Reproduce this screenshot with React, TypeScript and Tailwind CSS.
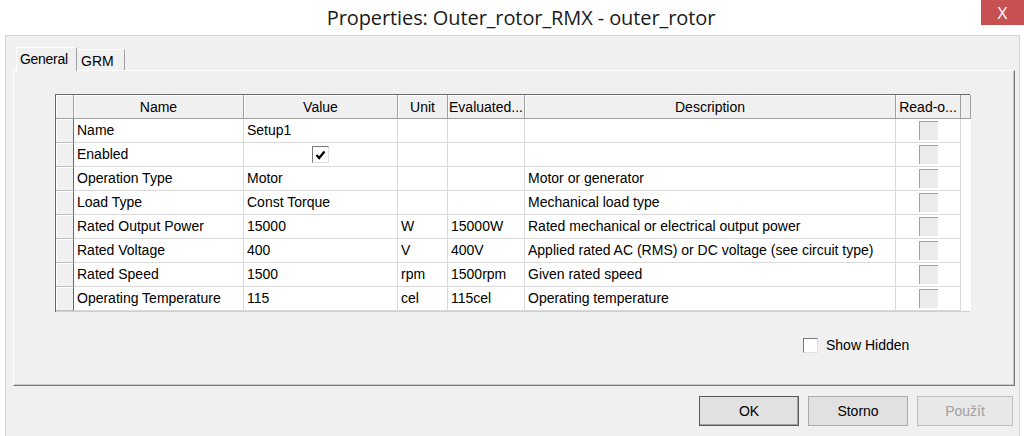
import React from 'react';

type Row = {
  name: string;
  value?: string;
  check?: boolean;
  unit?: string;
  evaluated?: string;
  desc?: string;
};

const rows: Row[] = [
  { name: 'Name', value: 'Setup1' },
  { name: 'Enabled', check: true },
  { name: 'Operation Type', value: 'Motor', desc: 'Motor or generator' },
  { name: 'Load Type', value: 'Const Torque', desc: 'Mechanical load type' },
  { name: 'Rated Output Power', value: '15000', unit: 'W', evaluated: '15000W', desc: 'Rated mechanical or electrical output power' },
  { name: 'Rated Voltage', value: '400', unit: 'V', evaluated: '400V', desc: 'Applied rated AC (RMS) or DC voltage (see circuit type)' },
  { name: 'Rated Speed', value: '1500', unit: 'rpm', evaluated: '1500rpm', desc: 'Given rated speed' },
  { name: 'Operating Temperature', value: '115', unit: 'cel', evaluated: '115cel', desc: 'Operating temperature' },
];

const cols = 'grid grid-cols-[18px_170px_154px_50px_77px_371px_65px_10px]';

function HeadCell({ children }: { children?: React.ReactNode }) {
  return (
    <div className="flex h-[24px] items-center justify-center overflow-hidden whitespace-nowrap border-r border-b border-[#a0a0a0] bg-[#f0f0f0] pt-[1px] shadow-[inset_1px_1px_0_#ffffff]">
      {children}
    </div>
  );
}

function Cell({ children, center }: { children?: React.ReactNode; center?: boolean }) {
  return (
    <div
      className={`flex h-[24px] items-center overflow-hidden whitespace-nowrap border-r border-b border-[#d9d9d9] bg-white ${
        center ? 'justify-center' : 'pl-[3px]'
      }`}
    >
      {children}
    </div>
  );
}

function ReadOnlyBox() {
  return <div className="h-[19px] w-[19px] border-t border-l border-[#a0a0a0] bg-[#ececec]" />;
}

function CheckedBox() {
  return (
    <div className="flex h-[17px] w-[17px] items-center justify-center border-t border-l border-[#7a7a7a] border-r border-b border-r-[#e0e0e0] border-b-[#e0e0e0] bg-white">
      <svg width="11" height="10" viewBox="0 0 11 10">
        <path d="M1.5 5 L4.2 8 L9.5 1.5" fill="none" stroke="#000" strokeWidth="2.2" />
      </svg>
    </div>
  );
}

export default function App() {
  return (
    <div className="flex h-[436px] w-[1024px] flex-col overflow-hidden bg-white font-['Liberation_Sans',Arial,sans-serif] text-[14px] text-black">
      {/* title bar */}
      <div className="relative flex h-[35px] shrink-0 items-center justify-center pl-[18px]">
        <span className="font-['Open_Sans',sans-serif] text-[20px] tracking-[-0.1px] text-[#1a1a1a]">
          Properties: Outer_rotor_RMX - outer_rotor
        </span>
        <div className="absolute top-0 right-0 flex h-[25px] w-[43px] items-center justify-center bg-[#c75050] font-['Open_Sans',sans-serif] text-[17px] text-white">
          X
        </div>
      </div>

      {/* body */}
      <div className="ml-[5px] mr-[4px] flex flex-1 flex-col border-t border-l border-r border-[#d4d4d4] bg-[#f0f0f0] pt-[11px] pl-[7px] pr-[4px]">
        {/* tabs */}
        <div className="relative z-10 flex h-[23px] items-end pl-[3px]">
          <div className="-mb-[1px] flex h-[24px] w-[61px] items-start border-t border-l border-r border-t-white border-l-white border-r-[#a0a0a0] bg-[#f0f0f0] pl-[3px] pt-[1px] tracking-[-0.3px]">
            General
          </div>
          <div className="flex h-[21px] w-[48px] items-start border-t border-r border-t-white border-r-[#a0a0a0] pl-[4px] pt-[1px]">
            GRM
          </div>
        </div>

        {/* panel */}
        <div className="flex h-[316px] flex-col border border-t-white border-l-white border-r-[#7a7a7a] border-b-[#7a7a7a] shadow-[inset_-1px_-1px_0_#c8c8c8]">
          {/* table */}
          <div className="ml-[41px] mt-[23px] w-[915px] border-t border-l border-[#6a6a6a]">
            <div className={cols}>
              <HeadCell />
              <HeadCell>Name</HeadCell>
              <HeadCell>Value</HeadCell>
              <HeadCell>Unit</HeadCell>
              <HeadCell>Evaluated...</HeadCell>
              <HeadCell>Description</HeadCell>
              <HeadCell>Read-o...</HeadCell>
              <div className="h-[24px] border-r border-b border-[#a0a0a0] bg-[#f0f0f0]" />
            </div>
            {rows.map((r) => (
              <div key={r.name} className={cols}>
                <div className="h-[24px] border-r border-b border-r-[#6a6a6a] border-b-[#c0c0c0] bg-[#f0f0f0] shadow-[inset_1px_1px_0_#ffffff]" />
                <Cell>{r.name}</Cell>
                <Cell center={r.check}>{r.check ? <CheckedBox /> : r.value}</Cell>
                <Cell>{r.unit}</Cell>
                <Cell>{r.evaluated}</Cell>
                <Cell>{r.desc}</Cell>
                <Cell center>
                  <ReadOnlyBox />
                </Cell>
                <div className="h-[24px] bg-white" />
              </div>
            ))}
            <div className="h-[1px] w-full bg-[#d0d0d0]" />
          </div>

          {/* show hidden */}
          <div className="mt-[23px] flex items-center pl-[789px]">
            <div className="h-[15px] w-[15px] border border-t-[#7a7a7a] border-l-[#7a7a7a] border-r-[#e0e0e0] border-b-[#e0e0e0] bg-white" />
            <span className="ml-[8px]">Show Hidden</span>
          </div>
        </div>

        {/* buttons */}
        <div className="mt-[10px] flex gap-[9px] pl-[686px]">
          <div className="flex h-[30px] w-[100px] items-center justify-center border border-[#5a5a5a] bg-[#e1e1e1] shadow-[inset_-1px_-1px_0_#a0a0a0]">
            OK
          </div>
          <div className="flex h-[30px] w-[100px] items-center justify-center border border-[#adadad] bg-[#e1e1e1]">
            Storno
          </div>
          <div className="flex h-[30px] w-[96px] items-center justify-center border border-[#bfbfbf] bg-[#e8e8e8] text-[#a0a0a0]">
            Použít
          </div>
        </div>
      </div>
    </div>
  );
}
